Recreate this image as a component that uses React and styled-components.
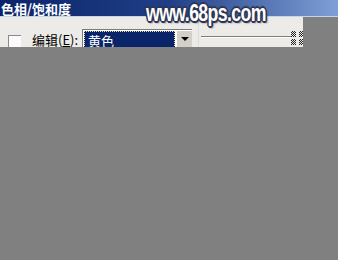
import React from 'react'
import styled, { createGlobalStyle } from 'styled-components'

const GlobalStyle = createGlobalStyle`
  html, body {
    margin: 0;
    padding: 0;
    background: #808080;
  }
`

const Window = styled.div`
  position: relative;
  width: 338px;
  height: 260px;
  overflow: hidden;
  background: #808080;
  font-family: "Noto Sans CJK SC", "Liberation Sans", sans-serif;
`

const TitleBar = styled.div`
  height: 17px;
  display: flex;
  align-items: center;
  padding-left: 1px;
  background: linear-gradient(to right, #0a246a 0%, #203f86 50%, #7e9fd6 100%);
  border-bottom: 1px solid #c8d4ea;
  box-sizing: border-box;
`

const Title = styled.span`
  color: #fff;
  font-weight: 700;
  font-size: 13px;
  line-height: 13px;
  white-space: nowrap;
`

const Watermark = styled.div`
  position: absolute;
  left: 146px;
  top: 0;
  font-family: "Liberation Sans", Arial, sans-serif;
  font-size: 23px;
  font-weight: 700;
  letter-spacing: -0.8px;
  white-space: nowrap;
  transform: scaleX(0.77);
  transform-origin: left top;
  color: #fff;
  text-shadow:
    1px 1px 0 #2c3553, -1px -1px 0 #2c3553, 1px -1px 0 #2c3553, -1px 1px 0 #2c3553,
    2px 0 0 #2c3553, -2px 0 0 #2c3553, 0 2px 0 #2c3553, 0 -2px 1px #2c3553,
    2px 2px 2px #3a4260;
`

const Panel = styled.div`
  width: 303px;
  height: 30px;
  overflow: hidden;
  background: #ecebe8;
  display: flex;
  align-items: flex-start;
  box-sizing: border-box;
  padding-top: 12px;
`

const CheckBox = styled.div`
  flex: none;
  width: 13px;
  height: 13px;
  margin: 6px 0 0 8px;
  box-sizing: border-box;
  border-top: 1px solid #8a8a8a;
  border-left: 1px solid #8a8a8a;
  background: #fbfbfb;
`

const Label = styled.span`
  flex: none;
  margin: 3px 0 0 11px;
  font-size: 13px;
  line-height: 15px;
  color: #000;
  white-space: nowrap;

  u {
    text-decoration: underline;
  }
`

const Select = styled.div`
  flex: none;
  margin-left: 4px;
  width: 110px;
  height: 20px;
  display: flex;
  box-sizing: border-box;
  border-top: 1px solid #7a7a7a;
  border-left: 1px solid #7a7a7a;
  background: #fff;
`

const SelectValue = styled.div`
  flex: 1;
  margin: 1px;
  background: #0a246a;
  outline: 1px dotted #e8e0a0;
  outline-offset: -1px;
  color: #fff;
  font-size: 13px;
  line-height: 15px;
  padding: 2px 0 0 4px;
  white-space: nowrap;
`

const SelectButton = styled.div`
  width: 16px;
  background: #d4d0c8;
  border-top: 1px solid #fff;
  border-left: 1px solid #fff;
  box-sizing: border-box;
  display: flex;
  justify-content: center;
  padding-top: 6px;
`

const Arrow = styled.div`
  width: 0;
  height: 0;
  border-left: 4px solid transparent;
  border-right: 4px solid transparent;
  border-top: 4px solid #000;
`

const Slider = styled.div`
  margin-left: 6px;
  margin-top: -6px;
  flex: 1;
  height: 30px;
  border-left: 1px solid #dcdcdc;
  display: flex;
  align-items: flex-start;
  padding-top: 13px;
  box-sizing: border-box;
`

const Groove = styled.div`
  width: 90px;
  margin-left: 2px;
  height: 1px;
  background: #7c7c7c;
  border-bottom: 1px solid #fff;
`

const Ticks = styled.div`
  display: grid;
  grid-template-columns: 5px 5px;
  grid-auto-rows: 6px;
  column-gap: 3px;
  row-gap: 2px;
  margin-top: -5px;
`

const Tick = styled.div`
  background: repeating-conic-gradient(#222 0 25%, #e8e8e8 0 50%) 0 0 / 2px 2px;
`

export default function App () {
  return (
    <Window>
      <GlobalStyle />
      <TitleBar>
        <Title>色相/饱和度</Title>
      </TitleBar>
      <Watermark>www.68ps.com</Watermark>
      <Panel>
        <CheckBox />
        <Label>编辑(<u>E</u>):</Label>
        <Select>
          <SelectValue>黄色</SelectValue>
          <SelectButton>
            <Arrow />
          </SelectButton>
        </Select>
        <Slider>
          <Groove />
          <Ticks>
            <Tick />
            <Tick />
            <Tick />
            <Tick />
          </Ticks>
        </Slider>
      </Panel>
    </Window>
  )
}
